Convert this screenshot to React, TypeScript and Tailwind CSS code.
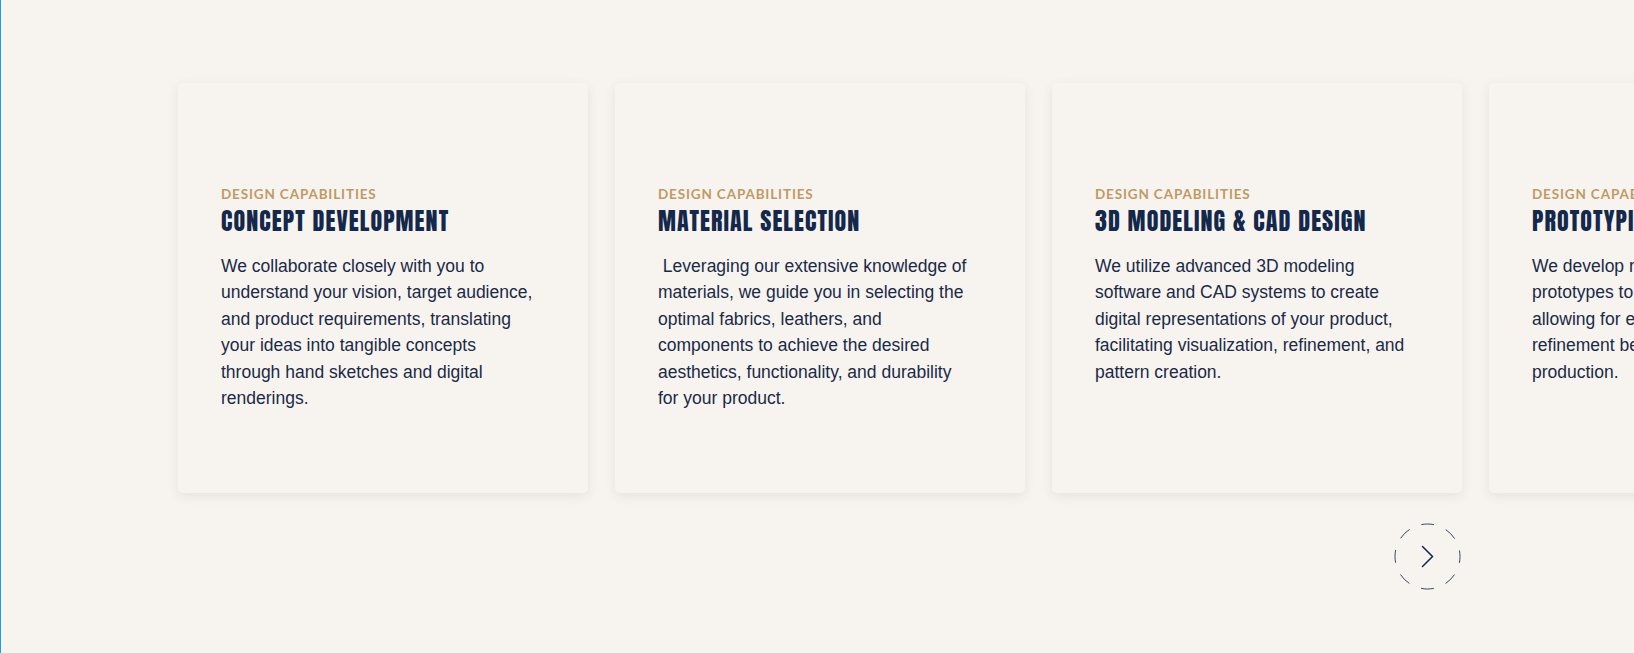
import React from "react";

type Card = { title: string; lines: string[] };

const cards: Card[] = [
  {
    title: "Concept Development",
    lines: [
      "We collaborate closely with you to",
      "understand your vision, target audience,",
      "and product requirements, translating",
      "your ideas into tangible concepts",
      "through hand sketches and digital",
      "renderings.",
    ],
  },
  {
    title: "Material Selection",
    lines: [
      "\u00a0Leveraging our extensive knowledge of",
      "materials, we guide you in selecting the",
      "optimal fabrics, leathers, and",
      "components to achieve the desired",
      "aesthetics, functionality, and durability",
      "for your product.",
    ],
  },
  {
    title: "3D Modeling & CAD Design",
    lines: [
      "We utilize advanced 3D modeling",
      "software and CAD systems to create",
      "digital representations of your product,",
      "facilitating visualization, refinement, and",
      "pattern creation.",
    ],
  },
  {
    title: "Prototyping",
    lines: [
      "We develop realistic physical",
      "prototypes to test form and function,",
      "allowing for evaluation and",
      "refinement before moving into",
      "production.",
    ],
  },
];

function CardView({ card }: { card: Card }) {
  return (
    <div className="w-[410px] h-[410px] shrink-0 rounded-[5px] bg-[#f7f4f0] shadow-[0_3px_12px_rgba(60,40,20,0.09)] pt-[103px] px-[43px]">
      <div className="font-['Lato',sans-serif] font-bold text-[13.5px] leading-[16px] tracking-[0.85px] text-[#c09a62] uppercase">
        Design Capabilities
      </div>
      <h3 className="font-['Anton',sans-serif] font-normal text-[24px] leading-[28px] tracking-[1.1px] text-[#13284a] uppercase mt-[5px]">
        {card.title}
      </h3>
      <p className="font-['Liberation_Sans',Arial,sans-serif] text-[17.5px] leading-[26.4px] text-[#1a2a47] mt-[18px] whitespace-nowrap">
        {card.lines.map((l, i) => (
          <React.Fragment key={i}>
            {l}
            {i < card.lines.length - 1 && <br />}
          </React.Fragment>
        ))}
      </p>
    </div>
  );
}

export default function App() {
  return (
    <div className="min-h-[653px] bg-[#f7f4f0] border-l border-[#2196f3] overflow-hidden">
      <div className="pt-[83px] pl-[177px]">
        <div className="flex gap-[27px] w-max">
          {cards.map((c) => (
            <CardView key={c.title} card={c} />
          ))}
        </div>
        <div className="w-[1284px] flex justify-end mt-[30px]">
          <button
            type="button"
            aria-label="Next"
            className="w-[67px] h-[67px] mr-[1px] flex items-center justify-center"
          >
            <svg width="67" height="67" viewBox="0 0 67 67" fill="none">
              <circle
                cx="33.5"
                cy="33.5"
                r="32.5"
                stroke="#13284a"
                strokeOpacity="0.85"
                strokeWidth="1"
                strokeDasharray="12.76 12.76"
                strokeDashoffset="6.38"
              />
              <path d="M28.5 23.5 L38.5 33.5 L28.5 43.5" stroke="#13284a" strokeWidth="1.5" strokeLinecap="round" strokeLinejoin="miter" />
            </svg>
          </button>
        </div>
      </div>
    </div>
  );
}
